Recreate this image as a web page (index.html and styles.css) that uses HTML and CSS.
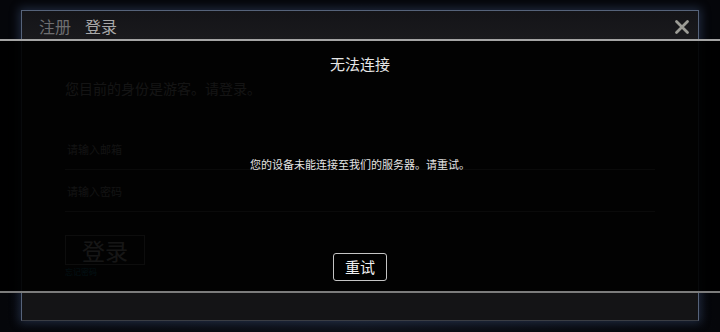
FILE: index.html
```html
<!DOCTYPE html>
<html lang="zh-CN">
<head>
  <meta charset="UTF-8">
  <meta name="viewport" content="width=device-width, initial-scale=1.0">
  <title>登录</title>
  <link rel="stylesheet" href="styles.css">
</head>
<body>

  <div class="screen">
    <div class="window">
      <header class="titlebar">
        <nav class="tabs">
          <a class="tab">注册</a>
          <a class="tab active">登录</a>
        </nav>
        <svg class="close" width="16" height="16" viewBox="0 0 16 16">
          <path d="M2.5 2.5 L13.5 13.5 M13.5 2.5 L2.5 13.5" stroke="#9c9c96" stroke-width="2.8" stroke-linecap="round"/>
        </svg>
      </header>

      <div class="content">
        <p class="greeting">您目前的身份是游客。请登录。</p>
        <div class="field">请输入邮箱</div>
        <div class="field">请输入密码</div>
        <button class="login-btn">登录</button>
        <a class="forgot">忘记密码</a>
      </div>
    </div>

    <div class="dialog">
      <h2 class="dialog-title">无法连接</h2>
      <div class="dialog-body">
        <p>您的设备未能连接至我们的服务器。请重试。</p>
      </div>
      <button class="retry-btn">重试</button>
    </div>
  </div>

</body>
</html>
```

FILE: styles.css
```css
* {
  margin: 0;
  padding: 0;
  box-sizing: border-box;
  font-family: "Noto Sans CJK SC", "Noto Sans", sans-serif;
}

body {
  width: 720px;
  height: 332px;
  overflow: hidden;
  background: radial-gradient(ellipse at 50% 100%, #0d1018 0%, #05060a 70%);
}

.screen {
  position: relative;
  height: 332px;
  padding-top: 10px;
}

.window {
  margin: 0 21px;
  height: 311px;
  border: 1px solid #56637a;
  border-bottom-color: #3a3d44;
  background: #141416;
  box-shadow: 0 0 9px 2px rgba(80, 110, 160, 0.35);
  display: flex;
  flex-direction: column;
}

.titlebar {
  height: 30px;
  display: flex;
  align-items: center;
  justify-content: space-between;
  padding: 0 8px 0 17px;
  background: linear-gradient(#141418, #1a1a1d);
}

.tabs {
  display: flex;
  gap: 14px;
}

.tab {
  font-size: 16px;
  color: #6e6e70;
}

.tab.active {
  color: #a8a8a8;
}

.close {
  margin-top: 2px;
}

.content {
  padding: 0 43px;
}

.greeting {
  margin-top: 37px;
  font-size: 14px;
  line-height: 20px;
  color: #c8c8c8;
}

.field {
  height: 42px;
  display: flex;
  align-items: center;
  padding-left: 2px;
  font-size: 11px;
  color: #bbb;
  border-bottom: 1px solid #6a6a6a;
}

.greeting + .field {
  margin-top: 30px;
}

.login-btn {
  display: block;
  margin-top: 23px;
  width: 80px;
  height: 30px;
  background: transparent;
  border: 1px solid #888;
  color: #ddd;
  font-size: 23px;
  line-height: 26px;
}

.forgot {
  display: block;
  margin-top: 1px;
  font-size: 8px;
  color: #22a8c0;
}

/* connection error dialog over the login window */
.dialog {
  position: absolute;
  left: 0;
  right: 0;
  top: 39px;
  height: 254px;
  background: rgba(0, 0, 0, 0.9);
  border-top: 2px solid #a4a4a4;
  border-bottom: 2px solid #7c7c7c;
  display: flex;
  flex-direction: column;
  align-items: center;
  padding: 12px 0 10px;
}

.dialog-title {
  font-size: 15px;
  font-weight: normal;
  line-height: 22px;
  color: #e6e6e6;
}

.dialog-body {
  flex: 1;
  display: flex;
  align-items: center;
}

.dialog-body p {
  font-size: 11px;
  color: #e4e4e4;
}

.retry-btn {
  width: 54px;
  height: 28px;
  background: #000;
  border: 1px solid #c4c4c4;
  border-radius: 3px;
  color: #f0f0f0;
  font-size: 15px;
  line-height: 24px;
}
```
